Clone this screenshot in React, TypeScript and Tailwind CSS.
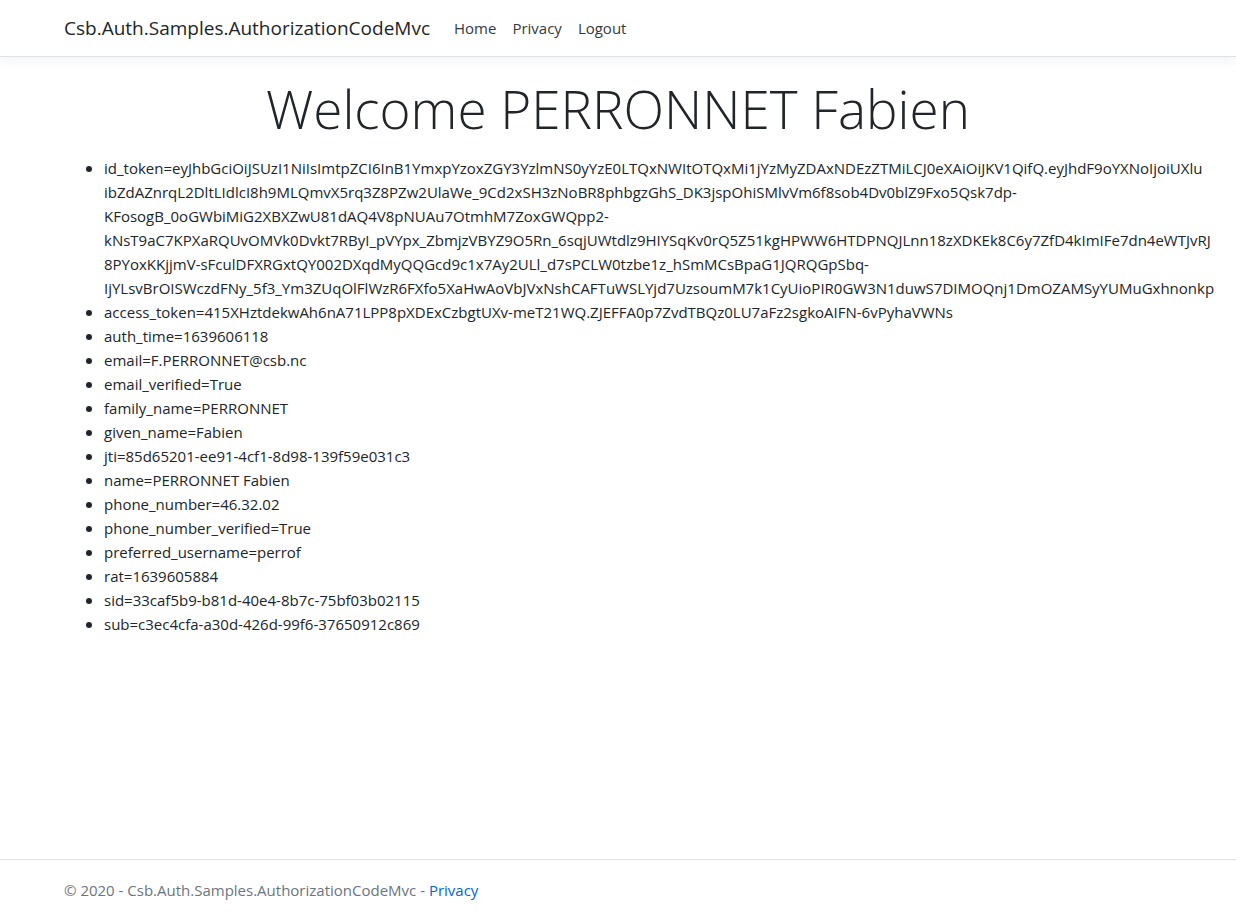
import { Fragment } from "react";

// The token is kept in segments so that it may only wrap between them.
const idToken = [
  "eyJhbGciOiJSUzI1NiIsImtpZCI6InB1YmxpYzoxZGY3YzlmNS0yYzE0LTQxNWItOTQxMi1jYzMyZDAxNDEzZTMiLCJ0eXAiOiJKV1QifQ.eyJhdF9oYXNoIjoiUXlu",
  "ibZdAZnrqL2DltLIdlcI8h9MLQmvX5rq3Z8PZw2UlaWe_9Cd2xSH3zNoBR8phbgzGhS_DK3jspOhiSMlvVm6f8sob4Dv0blZ9Fxo5Qsk7dp-",
  "KFosogB_0oGWbiMiG2XBXZwU81dAQ4V8pNUAu7OtmhM7ZoxGWQpp2-",
  "kNsT9aC7KPXaRQUvOMVk0Dvkt7RByI_pVYpx_ZbmjzVBYZ9O5Rn_6sqjUWtdlz9HIYSqKv0rQ5Z51kgHPWW6HTDPNQJLnn18zXDKEk8C6y7ZfD4kImIFe7dn4eWTJvRJ",
  "8PYoxKKjjmV-sFculDFXRGxtQY002DXqdMyQQGcd9c1x7Ay2ULl_d7sPCLW0tzbe1z_hSmMCsBpaG1JQRQGpSbq-",
  "IjYLsvBrOISWczdFNy_5f3_Ym3ZUqOlFlWzR6FXfo5XaHwAoVbJVxNshCAFTuWSLYjd7UzsoumM7k1CyUioPIR0GW3N1duwS7DIMOQnj1DmOZAMSyYUMuGxhnonkp",
];

const claims: [string, string][] = [
  ["access_token", "415XHztdekwAh6nA71LPP8pXDExCzbgtUXv-meT21WQ.ZJEFFA0p7ZvdTBQz0LU7aFz2sgkoAIFN-6vPyhaVWNs"],
  ["auth_time", "1639606118"],
  ["email", "F.PERRONNET@csb.nc"],
  ["email_verified", "True"],
  ["family_name", "PERRONNET"],
  ["given_name", "Fabien"],
  ["jti", "85d65201-ee91-4cf1-8d98-139f59e031c3"],
  ["name", "PERRONNET Fabien"],
  ["phone_number", "46.32.02"],
  ["phone_number_verified", "True"],
  ["preferred_username", "perrof"],
  ["rat", "1639605884"],
  ["sid", "33caf5b9-b81d-40e4-8b7c-75bf03b02115"],
  ["sub", "c3ec4cfa-a30d-426d-99f6-37650912c869"],
];

const navLinks = ["Home", "Privacy", "Logout"];

export default function App() {
  return (
    <div className="flex min-h-screen flex-col overflow-x-hidden bg-white font-['Segoe_UI','Open_Sans',sans-serif] text-[15px] leading-6 text-[#212529]">
      <header className="mb-4 border-b border-[#dee2e6] shadow-[0_4px_12px_rgba(0,0,0,0.05)]">
        <nav className="mx-auto flex w-full max-w-[1140px] items-center px-4 py-2">
          <a href="#" className="mr-6 py-1 text-[19px] leading-8">
            Csb.Auth.Samples.AuthorizationCodeMvc
          </a>
          <ul className="flex gap-4">
            {navLinks.map((label) => (
              <li key={label}>
                <a href="#" className="block py-2 text-[#343a40]">
                  {label}
                </a>
              </li>
            ))}
          </ul>
        </nav>
      </header>

      <main className="mx-auto w-full max-w-[1140px] grow px-4 pb-4">
        <h1 className="mb-3 text-center text-[53px] leading-[71px] font-light">Welcome PERRONNET Fabien</h1>
        <ul className="list-disc pl-10 marker:text-[16px]">
          <li>
            {idToken.map((segment, i) => (
              <Fragment key={segment}>
                {i === 0 ? `id_token=${segment}` : segment}
                <wbr />
              </Fragment>
            ))}
          </li>
          {claims.map(([key, value]) => (
            <li key={key}>{`${key}=${value}`}</li>
          ))}
        </ul>
      </main>

      <footer className="border-t border-[#dee2e6] text-[#6c757d]">
        <div className="mx-auto w-full max-w-[1140px] px-4 pt-[18px] pb-[17px]">
          © 2020 - Csb.Auth.Samples.AuthorizationCodeMvc -{" "}
          <a href="#" className="text-[#0366d6]">
            Privacy
          </a>
        </div>
      </footer>
    </div>
  );
}
